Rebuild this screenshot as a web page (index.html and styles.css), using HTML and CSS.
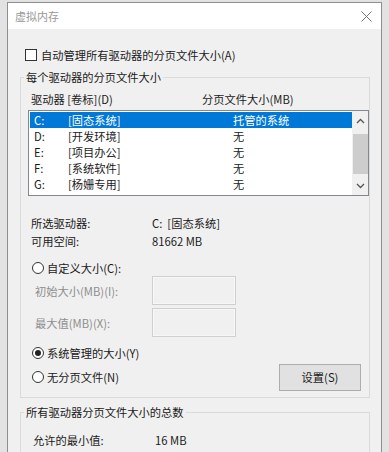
FILE: index.html
```html
<!DOCTYPE html>
<html lang="zh-CN">
<head>
    <meta charset="UTF-8">
    <title>虚拟内存</title>
    <link rel="stylesheet" href="styles.css">
</head>
<body>
    <div class="dialog">
        <!-- 标题栏 -->
        <div class="titlebar">
            <span class="title">虚拟内存</span>
            <svg class="close" width="11" height="11" viewBox="0 0 11 11">
                <path d="M0.5 0.5 L10.5 10.5 M10.5 0.5 L0.5 10.5" stroke="#7a7a7a" stroke-width="1" fill="none"/>
            </svg>
        </div>

        <div class="content">
            <div class="check-row">
                <span class="checkbox"></span>
                <span>自动管理所有驱动器的分页文件大小(A)</span>
            </div>

            <!-- 每个驱动器 -->
            <fieldset class="group group-main">
                <legend>每个驱动器的分页文件大小</legend>
                <div class="cols">
                    <span class="col-drive">驱动器 [卷标](D)</span>
                    <span>分页文件大小(MB)</span>
                </div>
                <div class="list">
                    <div class="rows">
                        <div class="row selected"><span class="c1">C:</span><span class="c2">[固态系统]</span><span>托管的系统</span></div>
                        <div class="row"><span class="c1">D:</span><span class="c2">[开发环境]</span><span>无</span></div>
                        <div class="row"><span class="c1">E:</span><span class="c2">[项目办公]</span><span>无</span></div>
                        <div class="row"><span class="c1">F:</span><span class="c2">[系统软件]</span><span>无</span></div>
                        <div class="row"><span class="c1">G:</span><span class="c2">[杨姗专用]</span><span>无</span></div>
                    </div>
                    <div class="scrollbar">
                        <svg width="9" height="6" viewBox="0 0 9 6"><path d="M1 5 L4.5 1.5 L8 5" stroke="#555" stroke-width="1.3" fill="none"/></svg>
                        <div class="thumb"></div>
                        <svg width="9" height="6" viewBox="0 0 9 6"><path d="M1 1 L4.5 4.5 L8 1" stroke="#555" stroke-width="1.3" fill="none"/></svg>
                    </div>
                </div>

                <div class="info first">
                    <span class="info-label">所选驱动器:</span>
                    <span>C:&nbsp;&nbsp;[固态系统]</span>
                </div>
                <div class="info">
                    <span class="info-label">可用空间:</span>
                    <span>81662 MB</span>
                </div>

                <div class="radio-row custom">
                    <span class="radio"></span>
                    <span>自定义大小(C):</span>
                </div>
                <div class="size-row">
                    <span class="size-label">初始大小(MB)(I):</span>
                    <span class="size-box"></span>
                </div>
                <div class="size-row second">
                    <span class="size-label">最大值(MB)(X):</span>
                    <span class="size-box"></span>
                </div>

                <div class="radio-row managed">
                    <span class="radio checked"></span>
                    <span>系统管理的大小(Y)</span>
                </div>
                <div class="bottom-row">
                    <div class="radio-row">
                        <span class="radio"></span>
                        <span>无分页文件(N)</span>
                    </div>
                    <button class="btn">设置(S)</button>
                </div>
            </fieldset>

            <!-- 总数 -->
            <fieldset class="group group-total">
                <legend>所有驱动器分页文件大小的总数</legend>
                <div class="total-row">
                    <span class="total-label">允许的最小值:</span>
                    <span>16 MB</span>
                </div>
            </fieldset>
        </div>
    </div>
</body>
</html>
```

FILE: styles.css
```css
body {
    margin: 0;
    background: #e2e2e2;
    font-family: "Noto Sans CJK SC", "Noto Sans", sans-serif;
    font-size: 11.25px;
    color: #1a1a1a;
    overflow: hidden;
    height: 452px;
}
.dialog {
    margin: 2px 0 0 7px;
    width: 375px;
    height: 460px;
    border: 1px solid #8e8e8e;
    box-sizing: border-box;
    background: #f0f0f0;
}
.titlebar {
    height: 26px;
    background: #fff;
    display: flex;
    align-items: center;
    justify-content: space-between;
    padding: 0 9px 0 7px;
}
.title {
    color: #999;
    font-size: 11px;
}
.content {
    padding-top: 16px;
}
.check-row {
    height: 20px;
    display: flex;
    align-items: center;
    margin-left: 17px;
}
.checkbox {
    width: 12px;
    height: 12px;
    border: 1px solid #333;
    background: #fff;
    box-sizing: border-box;
    margin-right: 4px;
}
.group {
    margin: 4px 0 0 12px;
    width: 350px;
    box-sizing: border-box;
    border: 1px solid #dadada;
    padding: 0;
    line-height: 16px;
}
.group legend {
    padding: 0 2px;
    margin-left: 3px;
    line-height: 16px;
}
.cols {
    display: flex;
    height: 16px;
    margin-top: 6px;
    padding-left: 10px;
}
.col-drive {
    width: 171px;
}
.list {
    margin: 3px 0 0 7px;
    width: 341px;
    height: 86px;
    border: 1px solid #828790;
    box-sizing: border-box;
    background: #fff;
    display: flex;
}
.rows {
    flex: 1;
    padding-top: 1px;
}
.row {
    display: flex;
    height: 16px;
    line-height: 16px;
    padding-left: 4px;
    margin-left: 1px;
}
.row.selected {
    background: #0078d7;
    color: #fff;
}
.c1 {
    width: 34px;
}
.c2 {
    width: 165px;
}
.scrollbar {
    width: 16px;
    background: #f0f0f0;
    display: flex;
    flex-direction: column;
    align-items: center;
    justify-content: space-between;
    padding: 7px 0 6px;
    box-sizing: border-box;
}
.thumb {
    width: 15px;
    height: 40px;
    background: #cdcdcd;
}
.info {
    display: flex;
    height: 16px;
    margin-top: 2px;
    padding-left: 10px;
}
.info.first {
    margin-top: 19px;
}
.info-label {
    width: 121px;
}
.radio-row {
    display: flex;
    align-items: center;
    padding-left: 11px;
    height: 16px;
}
.radio {
    width: 12px;
    height: 12px;
    border: 1px solid #333;
    border-radius: 50%;
    background: #fff;
    box-sizing: border-box;
    margin-right: 3px;
    position: relative;
}
.radio.checked::after {
    content: "";
    position: absolute;
    left: 2px;
    top: 2px;
    width: 6px;
    height: 6px;
    border-radius: 50%;
    background: #222;
}
.custom {
    margin-top: 11px;
}
.size-row {
    display: flex;
    align-items: center;
    height: 29px;
    padding-left: 14px;
    color: #8d8d8d;
}
.size-row.second {
    margin-top: 3px;
}
.size-label {
    width: 117px;
}
.size-box {
    width: 84px;
    height: 29px;
    border: 1px solid #cfcfcf;
    box-shadow: inset 0 0 0 1px #f7f7f7;
    box-sizing: border-box;
}
.managed {
    margin-top: 8px;
}
.bottom-row {
    display: flex;
    align-items: center;
    justify-content: space-between;
    height: 28px;
    margin-top: 2px;
    padding-right: 8px;
    margin-bottom: 6px;
}
.btn {
    width: 82px;
    height: 27px;
    background: #e1e1e1;
    border: 1px solid #adadad;
    font-family: inherit;
    font-size: 11.25px;
    color: #1a1a1a;
    padding: 0;
}
.group-total {
    margin-top: 6px;
    height: 60px;
}
.total-row {
    display: flex;
    height: 16px;
    margin-top: 12px;
    padding-left: 12px;
}
.total-label {
    width: 122px;
}
```
